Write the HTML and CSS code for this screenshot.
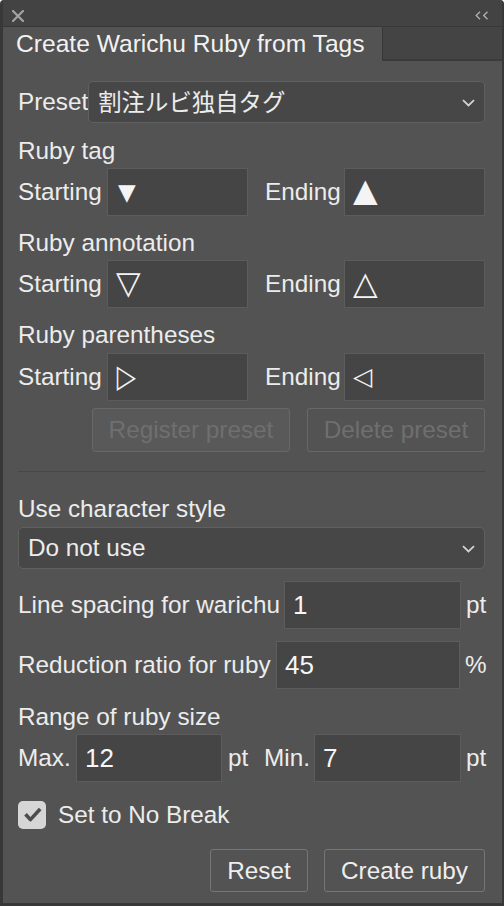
FILE: index.html
```html
<!DOCTYPE html>
<html lang="en">
<head>
<meta charset="utf-8">
<title>Create Warichu Ruby from Tags</title>
<link rel="stylesheet" href="styles.css">
</head>
<body>
<div class="window">
  <div class="titlebar">
    <svg class="close" width="12" height="12" viewBox="0 0 12 12"><path d="M1 1 L11 11 M11 1 L1 11" stroke="#a3a3a3" stroke-width="2.2" stroke-linecap="round" fill="none"/></svg>
    <svg class="collapse" width="14" height="9" viewBox="0 0 14 9"><path d="M5 0.8 L1.2 4.5 L5 8.2 M12.5 0.8 L8.7 4.5 L12.5 8.2" stroke="#b0b0b0" stroke-width="1.3" fill="none"/></svg>
  </div>
  <div class="tabs">
    <div class="tab">Create Warichu Ruby from Tags</div>
    <div class="tab-rest"></div>
  </div>
  <div class="panel">
    <div class="preset-row">
      <span class="label">Preset</span>
      <div class="select"><span class="jp">割注ルビ独自タグ</span><svg class="chev" width="13" height="8" viewBox="0 0 13 8"><path d="M1 1.2 L6.5 6.5 L12 1.2" stroke="#d2d2d2" stroke-width="1.8" fill="none"/></svg></div>
    </div>

    <div class="heading first">Ruby tag</div>
    <div class="pair">
      <span class="label">Starting</span>
      <div class="field"><span class="tri t-down-solid">▼</span></div>
      <span class="label end">Ending</span>
      <div class="field"><span class="tri t-up-solid">▲</span></div>
    </div>

    <div class="heading">Ruby annotation</div>
    <div class="pair">
      <span class="label">Starting</span>
      <div class="field"><span class="tri t-down">▽</span></div>
      <span class="label end">Ending</span>
      <div class="field"><span class="tri t-up">△</span></div>
    </div>

    <div class="heading">Ruby parentheses</div>
    <div class="pair last-pair">
      <span class="label">Starting</span>
      <div class="field"><span class="tri t-right">▷</span></div>
      <span class="label end">Ending</span>
      <div class="field"><span class="tri t-left">◁</span></div>
    </div>

    <div class="preset-buttons">
      <button class="btn disabled filled" style="width:198px">Register preset</button>
      <button class="btn disabled" style="width:178px">Delete preset</button>
    </div>

    <div class="separator"></div>

    <div class="heading style-heading">Use character style</div>
    <div class="select wide"><span>Do not use</span><svg class="chev" width="13" height="8" viewBox="0 0 13 8"><path d="M1 1.2 L6.5 6.5 L12 1.2" stroke="#d2d2d2" stroke-width="1.8" fill="none"/></svg></div>

    <div class="num-row spacing-row">
      <span class="label grow">Line spacing for warichu</span>
      <div class="field value w177">1</div>
      <span class="unit">pt</span>
    </div>

    <div class="num-row ratio-row">
      <span class="label grow">Reduction ratio for ruby</span>
      <div class="field value w184">45</div>
      <span class="unit">%</span>
    </div>

    <div class="heading range-heading">Range of ruby size</div>
    <div class="range-row">
      <span class="label">Max.</span>
      <div class="field value">12</div>
      <span class="unit">pt</span>
      <span class="label">Min.</span>
      <div class="field value">7</div>
      <span class="unit">pt</span>
    </div>

    <label class="check-row">
      <span class="checkbox"><svg width="28" height="28" viewBox="0 0 28 28"><path d="M7.5 13.2 L12.4 18.6 L22.2 8" stroke="#4d4d4d" stroke-width="3.6" fill="none" stroke-linejoin="round"/></svg></span>
      <span class="label">Set to No Break</span>
    </label>

    <div class="action-buttons">
      <button class="btn" style="width:98px">Reset</button>
      <button class="btn" style="width:161px">Create ruby</button>
    </div>
  </div>
</div>
</body>
</html>
```
FILE: styles.css
```css
* { box-sizing: border-box; }
html, body { margin: 0; padding: 0; background: #ffffff; }
body {
  font-family: "Liberation Sans", "Noto Sans CJK JP", sans-serif;
  color: #ececec;
  font-size: 24.3px;
}
.window {
  width: 504px;
  height: 906px;
  background: #535353;
  border-left: 3px solid #383838;
  border-right: 2px solid #383838;
  border-bottom: 3px solid #383838;
  display: flex;
  flex-direction: column;
  border-top-left-radius: 4px;
  border-top-right-radius: 4px;
  overflow: hidden;
}
.titlebar {
  height: 27px;
  flex: none;
  background: #434343;
  border-bottom: 1px solid #383838;
  display: flex;
  align-items: flex-start;
  justify-content: space-between;
  padding: 10px 13px 0 9px;
}
.collapse { margin-top: 1px; }
.tabs {
  height: 34px;
  flex: none;
  display: flex;
}
.tab {
  width: 379px;
  background: #535353;
  padding-left: 13px;
  line-height: 33px;
  font-size: 24.6px;
  color: #f2f2f2;
  white-space: nowrap;
}
.tab-rest {
  flex: 1;
  background: #444444;
  border-left: 1px solid #383838;
  border-bottom: 2px solid #3b3b3b;
}
.panel {
  flex: 1;
  padding: 0 17px 0 15px;
  display: flex;
  flex-direction: column;
}
.label { line-height: 28px; white-space: nowrap; }
.preset-row {
  margin-top: 20px;
  display: flex;
  align-items: center;
}
.select {
  flex: 1;
  height: 42px;
  background: #474747;
  border: 1px solid #606060;
  border-radius: 5px;
  display: flex;
  align-items: center;
  justify-content: space-between;
  padding: 0 9px 0 9px;
}
.select .chev { margin-top: 1px; }
.jp {
  font-family: "Noto Sans CJK JP", sans-serif;
  font-size: 23.4px;
  margin-top: -2px;
}
.heading { line-height: 28px; margin-top: 13px; }
.heading.first { margin-top: 14px; }
.pair {
  margin-top: 3px;
  display: grid;
  grid-template-columns: 89px 141px 96px 141px;
  align-items: center;
}
.pair.last-pair { margin-top: 4px; }
.label.end { padding-left: 17px; }
.field {
  height: 48px;
  background: #454545;
  border: 1px solid #5c5c5c;
  display: flex;
  align-items: center;
  padding-left: 8px;
}
.tri {
  font-family: "DejaVu Sans", sans-serif;
  color: #f4f4f4;
  line-height: 1;
  display: inline-block;
}
.t-down-solid { font-size: 23px; padding-left: 2px; }
.t-up-solid { font-size: 32px; margin-top: -5px; }
.t-down { font-size: 32px; margin-top: -2px; }
.t-up { font-size: 32px; margin-top: -3px; }
.t-right { font-size: 32px; padding-left: 1px; transform: scaleX(0.78); transform-origin: left center; margin-top: -2px; }
.t-left { font-size: 25px; margin-top: -2px; }
.preset-buttons {
  margin-top: 7px;
  display: flex;
  justify-content: flex-end;
  gap: 17px;
}
.btn {
  height: 44px;
  font-family: "Liberation Sans", sans-serif;
  font-size: 24.3px;
  color: #eeeeee;
  background: transparent;
  border: 1px solid #767676;
  border-radius: 3px;
  padding: 0;
}
.btn.disabled { color: #6f6f6f; border-color: #686868; }
.btn.filled { background: #595959; }
.separator {
  margin-top: 19px;
  height: 1px;
  background: #474747;
}
.heading.style-heading { margin-top: 23px; }
.select.wide { flex: none; margin-top: 4px; padding-left: 9px; }
.num-row {
  display: flex;
  align-items: center;
  margin-top: 12px;
}
.grow { flex: 1; }
.value {
  font-size: 26px;
  color: #f6f6f6;
  padding-left: 8px;
}
.w177 { width: 177px; }
.w184 { width: 184px; }
.unit { width: 24px; padding-left: 5px; line-height: 28px; }
.ratio-row .unit { width: 25px; }
.heading.range-heading { margin-top: 14px; }
.range-row {
  margin-top: 3px;
  display: grid;
  grid-template-columns: 58px 146px 42px 50px 147px 24px;
  align-items: center;
}
.range-row .unit { width: auto; padding-left: 6px; }
.range-row .unit:last-child { padding-left: 5px; }
.check-row {
  margin-top: 19px;
  display: flex;
  align-items: center;
  gap: 12px;
}
.checkbox {
  width: 28px;
  height: 28px;
  background: #d6d6d6;
  border-radius: 5px;
  display: block;
}
.checkbox svg { display: block; }
.action-buttons {
  margin-top: 20px;
  display: flex;
  justify-content: flex-end;
  gap: 16px;
}
.action-buttons .btn { height: 43px; }
```
